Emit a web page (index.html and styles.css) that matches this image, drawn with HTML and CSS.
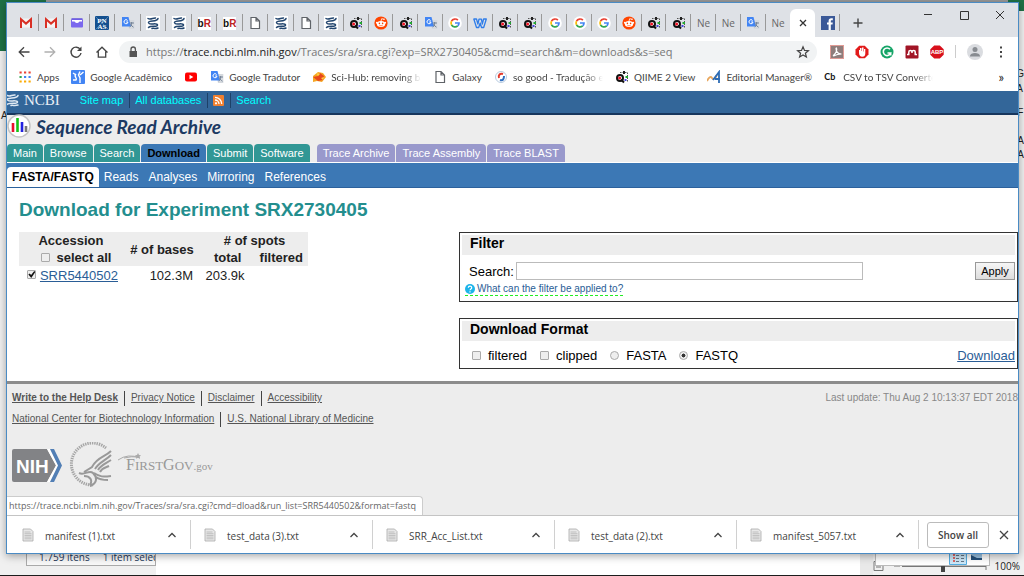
FILE: index.html
```html
<!DOCTYPE html>
<html lang="en">
<head>
<meta charset="utf-8">
<title>Download for Experiment SRX2730405</title>
<link rel="stylesheet" href="styles.css">
</head>
<body>
<svg class="defs" aria-hidden="true">
  <symbol id="gmail" viewBox="0 0 14 14"><path fill="#f4f4f4" d="M1 2.500h12v9H1z"/><path fill="none" stroke="#d93025" stroke-width="2" d="M2 12V3.300l5 4.300 5-4.300V12"/></symbol>
  <symbol id="mail" viewBox="0 0 14 14"><rect x="1" y="3" width="12" height="8.500" rx="1" fill="#7b68ee"/><path fill="#fff" d="M2 4h10v1.500H9.500q-2.500 3-5 0H2z"/><path d="M1.500 2.800h11" stroke="#5a48d8"/></symbol>
  <symbol id="gt" viewBox="0 0 14 14"><path fill="#d5d9de" d="M6 4h7.300v9H8z"/><path fill="#4285f4" d="M1 1h6.500l2.500 9.500H1z"/><path fill="none" stroke="#fff" d="M6.600 4.500A2 2 0 1 0 7 6H5.200"/><path fill="none" stroke="#6b7a90" stroke-width=".9" d="M8.500 7H13M10.700 6v1c0 2-1 3.500-2 4M9.500 8.200c.8 1.500 1.800 2.300 3 3"/></symbol>
  <symbol id="ncbi" viewBox="0 0 14 14"><rect width="14" height="14" fill="#fff"/><path fill="none" stroke="#23466f" stroke-width="1.500" stroke-linecap="round" d="M2 2.500c2.500 1.800 5-.8 7.500-.5M12 2.500C11 6.500 3 3.500 2.500 6.500M3 7.500c2 1.500 8-1 8.500 1.500C11.500 11.500 5 9 2.500 11.500M6 12.500c2-.5 4 .5 6-.5"/></symbol>
  <symbol id="doc" viewBox="0 0 14 14"><path fill="#fff" stroke="#5f6368" stroke-width="1.200" d="M3 1.500h5l3.500 3.500v7.500H3zM8 1.500V5h3.500"/></symbol>
  <symbol id="q" viewBox="0 0 14 14"><path fill="none" stroke="#555" stroke-dasharray="1.500 1" d="M5 2.500h7.500v9"/><circle cx="5" cy="8" r="3" fill="#fff" stroke="#111" stroke-width="2"/><path stroke="#111" stroke-width="2" d="M6 9.500l3 3"/><circle cx="4.600" cy="8" r="1.500" fill="#e12"/><path fill="#2a3" d="M10.500 6h2.500v2h-2.500z"/><path fill="#44d" d="M9.500 9h2v2h-2z"/><path fill="#222" d="M8 1h2v3H8z"/></symbol>
  <symbol id="reddit" viewBox="0 0 14 14"><circle cx="7" cy="7" r="6.600" fill="#ff4500"/><path fill="none" stroke="#fff" stroke-width=".8" d="M7 5l.7-2.300 2 .5"/><circle cx="2.900" cy="6.700" r="1" fill="#fff"/><circle cx="11.100" cy="6.700" r="1" fill="#fff"/><circle cx="10" cy="3.200" r=".8" fill="#fff"/><ellipse cx="7" cy="8" rx="4.200" ry="3" fill="#fff"/><circle cx="5.400" cy="7.400" r=".8" fill="#ff4500"/><circle cx="8.600" cy="7.400" r=".8" fill="#ff4500"/><path fill="none" stroke="#ff4500" stroke-width=".6" d="M5.300 9.300q1.700 1 3.400 0"/></symbol>
  <symbol id="g" viewBox="0 0 14 14"><circle cx="7" cy="7" r="6.800" fill="#fff"/><g fill="none" stroke-width="1.700"><path stroke="#ea4335" d="M3.500 5.200A4 4 0 0 1 9.900 4.200"/><path stroke="#fbbc05" d="M3.500 5.200a4 4 0 0 0 0 3.600"/><path stroke="#34a853" d="M3.500 8.800a4 4 0 0 0 6.200 1.100"/><path stroke="#4285f4" d="M9.700 9.900A4 4 0 0 0 11 7H7"/></g></symbol>
  <symbol id="w" viewBox="0 0 14 14"><path fill="none" stroke="#2f7de9" stroke-width="1.300" stroke-linejoin="round" d="M.8 3h2.700l1.400 5L6 3.200h2.400L9.300 8l1.300-5h2.700l-2.600 8.500H8.500L7.200 7l-1.500 4.500H3.500z"/></symbol>
  <symbol id="fb" viewBox="0 0 14 14"><rect width="14" height="14" fill="#3b5998"/><path fill="#fff" d="M7.600 14V8.500H6V6.500h1.600V5c0-1.900 1-2.800 2.700-2.800h1.500v2h-1c-.8 0-1 .3-1 1v1.300h2l-.3 2H9.800V14z"/></symbol>
  <symbol id="chev" viewBox="0 0 10 6"><path fill="none" stroke="#444" stroke-width="1.300" d="M1.500 5L5 1.500 8.500 5"/></symbol>
  <symbol id="file" viewBox="0 0 12 14"><path fill="#e8e8e8" stroke="#aaa" stroke-width=".8" d="M1 1h7.500L11 3.500V13H1z"/><path stroke="#b4b4b4" stroke-width=".8" d="M2.500 4h6M2.500 5.700h7M2.500 7.400h7M2.500 9.100h7M2.500 10.800h7"/></symbol>
</svg>

<div class="desktop">
  <div class="behind behind-green-left"></div>
  <div class="behind behind-green-right"></div>
  <div class="behind behind-sheet"></div>
  <div class="behind behind-letter">A</div>
  <div class="behind behind-cells"><span>G</span><span>A</span></div>
  <div class="behind behind-cells behind-cells-low"><span>F</span><span></span><span>A</span><span>A</span></div>
  <div class="behind behind-zoom">
    <svg viewBox="0 0 116 12"><path fill="none" stroke="#777" d="M1 1.500h9v9H1zM3 4h5M3 7h5M21 6h6M29 6.500h84M113 3v7"/><path fill="#444" d="M68 3h4v9h-4z"/></svg>
    <span>100%</span>
  </div>
  <div class="behind behind-explorer"><span>1.759 itens</span><span>1 item selecionado</span></div>
  <div class="behind behind-views">
    <svg viewBox="0 0 34 12"><path fill="#cde8f8" stroke="#56aee2" d="M.5.500h17v11H.5z"/><path stroke="#d66" stroke-width="2" stroke-dasharray="2 1" d="M5 1v9"/><path stroke="#678" d="M7 2.500h3M7 5.500h3M7 8.500h3M12 2.500h3M12 5.500h3M12 8.500h3"/><path fill="#9cc4e4" d="M22 1h11v6H22z"/><path fill="#25507a" d="M22 7V2l6 3h5v2z"/></svg>
  </div>

  <div class="window">
    <header class="strip">
      <div class="tabs">
        <div class="group group-a">
          <span class="tab"><svg><use href="#gmail"/></svg></span>
          <span class="tab"><svg><use href="#gmail"/></svg></span>
          <span class="tab"><svg><use href="#mail"/></svg></span>
          <span class="tab"><svg viewBox="0 0 14 14"><rect width="14" height="14" fill="#14508f"/><path stroke="#6f9dcb" stroke-width=".6" d="M0 0l14 14M14 0L0 14"/><text x="7" y="6.500" class="pnas-text">PN</text><text x="7" y="13" class="pnas-text">AS</text></svg></span>
          <span class="tab"><svg><use href="#gt"/></svg></span>
          <span class="tab"><svg><use href="#ncbi"/></svg></span>
          <span class="tab"><svg><use href="#ncbi"/></svg></span>
          <span class="tab"><b class="br">b<i>R</i></b></span>
          <span class="tab"><b class="br">b<i>R</i></b></span>
          <span class="tab"><svg><use href="#doc"/></svg></span>
          <span class="tab"><svg><use href="#ncbi"/></svg></span>
          <span class="tab"><svg><use href="#doc"/></svg></span>
        </div>
        <div class="group group-b">
          <span class="tab"><svg><use href="#ncbi"/></svg></span>
          <span class="tab"><svg><use href="#q"/></svg></span>
          <span class="tab"><svg><use href="#reddit"/></svg></span>
          <span class="tab"><svg><use href="#q"/></svg></span>
          <span class="tab"><svg><use href="#gt"/></svg></span>
          <span class="tab"><svg><use href="#g"/></svg></span>
          <span class="tab"><svg><use href="#w"/></svg></span>
          <span class="tab"><svg><use href="#q"/></svg></span>
          <span class="tab"><svg><use href="#q"/></svg></span>
          <span class="tab"><svg><use href="#g"/></svg></span>
          <span class="tab"><svg><use href="#g"/></svg></span>
          <span class="tab"><svg><use href="#g"/></svg></span>
          <span class="tab"><svg><use href="#reddit"/></svg></span>
          <span class="tab"><svg><use href="#q"/></svg></span>
          <span class="tab"><svg><use href="#q"/></svg></span>
          <span class="tab">Ne</span>
          <span class="tab">Ne</span>
          <span class="tab"><svg><use href="#gt"/></svg></span>
          <span class="tab bare">Ne</span>
          <span class="tab active"><button aria-label="Close tab"><svg viewBox="0 0 14 14"><path stroke="#333" stroke-width="1.300" d="M4 4l6 6M10 4l-6 6"/></svg></button></span>
          <span class="tab"><svg><use href="#fb"/></svg></span>
        </div>
        <button class="new-tab" aria-label="New tab"><svg viewBox="0 0 14 14"><path stroke="#444" stroke-width="1.400" d="M7 2.500v9M2.500 7h9"/></svg></button>
      </div>
      <div class="controls">
        <button aria-label="Minimize"><svg viewBox="0 0 14 14"><path stroke="#333" d="M3 6.500h8"/></svg></button>
        <button aria-label="Maximize"><svg viewBox="0 0 14 14"><path fill="none" stroke="#333" d="M3.500 3.500h8v8h-8z"/></svg></button>
        <button aria-label="Close"><svg viewBox="0 0 14 14"><path stroke="#333" d="M3 3l8 8M11 3l-8 8"/></svg></button>
      </div>
    </header>

    <div class="toolbar">
      <div class="nav">
        <button aria-label="Back"><svg viewBox="0 0 14 14"><path fill="none" stroke="#444" stroke-width="1.300" d="M12.500 7H2.500M7 2.200L2.200 7 7 11.800"/></svg></button>
        <button aria-label="Forward"><svg viewBox="0 0 14 14"><path fill="none" stroke="#b0b0b0" stroke-width="1.300" d="M1.500 7h10M7 2.200L11.800 7 7 11.800"/></svg></button>
        <button aria-label="Reload"><svg viewBox="0 0 14 14"><path fill="none" stroke="#444" stroke-width="1.400" d="M11.300 4.500A5 5 0 1 0 12 8"/><path fill="#444" d="M12.500 1.500v4.500H8z"/></svg></button>
        <button aria-label="Home"><svg viewBox="0 0 14 14"><path fill="none" stroke="#444" stroke-width="1.300" d="M1.500 7.500L7 2.200l5.500 5.300M3.300 6.500v5.700h7.400V6.500"/></svg></button>
      </div>
      <div class="address">
        <svg viewBox="0 0 14 14"><path fill="#555" d="M3.500 6h7.500v6H3.500z"/><path fill="none" stroke="#555" stroke-width="1.300" d="M5 6V4.200a2.200 2.200 0 0 1 4.400 0V6"/></svg>
        <span class="url">https://<em>trace.ncbi.nlm.nih.gov</em>/Traces/sra/sra.cgi?exp=SRX2730405&amp;cmd=search&amp;m=downloads&amp;s=seq</span>
        <button aria-label="Bookmark this page"><svg viewBox="0 0 14 14"><path fill="none" stroke="#444" stroke-width="1.200" d="M7 1.800l1.500 3.600 3.900.3-3 2.500 1 3.800L7 10l-3.400 2 1-3.800-3-2.500 3.900-.3z"/></svg></button>
      </div>
      <div class="extensions">
        <svg viewBox="0 0 14 14"><rect x=".5" y=".5" width="13" height="13" fill="#8f7d7b" stroke="#e09a94"/><path fill="none" stroke="#fff" stroke-width="1.200" d="M6 2.500c2 2 0 6-3 8.500M6 3c0 4 2 6 5.500 6-3 0-5 .5-8 2"/></svg>
        <svg viewBox="0 0 14 14"><path fill="#e21b1b" d="M4.200.7h5.600l3.700 3.700v5.200l-3.700 3.700H4.200L.5 9.600V4.400z"/><path fill="#fff" d="M4 5h1V3h1.500v3h.5V2.500h1.500v4H9V4h1.300v4.500c0 2-1 3.300-3 3.300S4 10 4 8z"/></svg>
        <svg viewBox="0 0 14 14"><circle cx="7" cy="7" r="6.500" fill="#15a467"/><path fill="none" stroke="#fff" stroke-width="1.600" d="M10 4.300A3.800 3.800 0 1 0 10.700 8H7.500M10.700 8v2.500"/></svg>
        <svg viewBox="0 0 14 14"><rect x=".5" y=".5" width="13" height="13" rx="1" fill="#a11526"/><path fill="none" stroke="#fff" stroke-width="1.500" d="M3.800 9.500V7q0-1.500 1.600-1.500T7 7v1-1q0-1.500 1.600-1.500T10.200 7v2.500M2 9.500h2.500M9.500 9.500H12"/></svg>
        <svg viewBox="0 0 14 14"><path fill="#d8101c" d="M4.200.5h5.600l3.900 3.700v5.600l-3.900 3.700H4.200L.3 9.800V4.200z"/><text x="7" y="9.200" class="abp-text">ABP</text></svg>
        <i class="rule"></i>
        <svg class="avatar" viewBox="0 0 16 16"><circle cx="8" cy="8" r="8" fill="#dadce0"/><circle cx="8" cy="5.500" r="2.500" fill="#888c91"/><path fill="#888c91" d="M3 12c0-4 10-4 10 0v.5H3z"/></svg>
        <button aria-label="Menu"><svg viewBox="0 0 14 14"><path fill="#444" d="M6 1.500h2v2H6zM6 6h2v2H6zM6 10.500h2v2H6z"/></svg></button>
      </div>
    </div>

    <nav class="bookmarks">
      <a href="#"><svg viewBox="0 0 14 14"><path stroke="#ea4335" stroke-width="2.200" stroke-dasharray="2.200 2.300" d="M1.500 2.500h12"/><path stroke="#34a853" stroke-width="2.200" stroke-dasharray="2.200 2.300" d="M1.500 7h6"/><path stroke="#4285f4" stroke-width="2.200" stroke-dasharray="2.200 2.300" d="M6 7h8"/><path stroke="#fbab05" stroke-width="2.200" stroke-dasharray="2.200 2.300" d="M1.500 11.500h12"/></svg>Apps</a>
      <a href="#"><svg viewBox="0 0 14 14"><rect width="14" height="14" rx="1" fill="#4285f4"/><path fill="none" stroke="#fff" stroke-width="1.400" d="M2 3l3 2M9 1.500L7.500 5 9 8v5M5 4c-3 3 2 4 0 6H2M12.500 2L9 5"/></svg>Google Acadêmico</a>
      <a href="#" aria-label="YouTube"><svg viewBox="0 0 14 14"><rect x="1" y="2.500" width="12" height="9" rx="2" fill="#f00"/><path fill="#fff" d="M5.500 4.800v4.400L9.300 7z"/></svg></a>
      <a href="#"><svg><use href="#gt"/></svg>Google Tradutor</a>
      <a href="#" class="fade"><svg viewBox="0 0 14 14"><path fill="#f5a623" d="M1 6l5-4 5 1 3 4-4 5-5-1-4 1z"/><path fill="#e8481c" d="M1 7l5-1 2-3 4 3-1 4-5 1z"/><path fill="#ffd044" d="M4 3l4 1-2 2zM9 8l3-1-1 3z"/></svg><span>Sci-Hub: removing ba</span></a>
      <a href="#"><svg><use href="#doc"/></svg>Galaxy</a>
      <a href="#" class="fade"><svg viewBox="0 0 14 14"><circle cx="7" cy="7" r="5.500" fill="#fff" stroke="#b8cbe0"/><path fill="none" stroke="#e33b2e" stroke-width="2" d="M9 4C6 3 4 5 5 8"/><path fill="none" stroke="#2f6fc0" stroke-width="2" d="M6 10c3 1 4-1 4-4"/></svg><span>so good - Tradução e</span></a>
      <a href="#"><svg><use href="#q"/></svg>QIIME 2 View</a>
      <a href="#"><svg viewBox="0 0 14 14"><path fill="none" stroke="#e8a860" stroke-width="1.800" d="M0 11q3-6 5-3t5-3"/><path fill="none" stroke="#2d6cb5" stroke-width="1.800" d="M6 10l6-8v11M8 9h5"/></svg>Editorial Manager®</a>
      <a href="#" class="fade"><b>Cb</b><span>CSV to TSV Converter</span></a>
      <button class="more" aria-label="More bookmarks">»</button>
    </nav>

    <div class="page">
      <div class="ncbi-bar">
        <svg class="ncbi-mark" viewBox="0 0 12 14"><path fill="none" stroke="#dfe9f3" stroke-width="1.500" stroke-linecap="round" d="M0 2.500c3 1.800 5-1 8-.5M11 2.500C10 6.500 1 3.500 0 6.500M1 7.500c2 1.500 9-1 9.500 1.500C10.500 11.500 3 9 0 11.500M4 12.500c2-.5 4 .5 7-.5"/></svg>
        <span class="ncbi-name">NCBI</span>
        <a href="#">Site map</a><a href="#">All databases</a>
        <a href="#" aria-label="RSS"><svg class="rss" viewBox="0 0 11 11"><rect width="11" height="11" rx="1" fill="#f08030"/><circle cx="3" cy="8.300" r="1.100" fill="#fff"/><path fill="none" stroke="#fff" stroke-width="1.300" d="M2 5a4 4 0 0 1 4 4M2 2.300A6.700 6.700 0 0 1 8.700 9"/></svg></a>
        <a href="#">Search</a>
      </div>
      <div class="brand">
        <svg viewBox="0 0 24 24"><circle cx="12" cy="12" r="11" fill="#fff" stroke="#c4c4c4" stroke-width="1.500"/><path stroke="#e8112d" stroke-width="2.600" d="M6 9v9"/><path stroke="#16c416" stroke-width="2.600" d="M10.500 4v14"/><path stroke="#2222e0" stroke-width="2.600" d="M15 8v10"/><path stroke="#777" stroke-width="2.600" d="M19 12v6"/></svg>
        <span>Sequence Read Archive</span>
      </div>
      <nav class="main-tabs">
        <a href="#">Main</a><a href="#">Browse</a><a href="#">Search</a><a href="#" class="current">Download</a><a href="#">Submit</a><a href="#">Software</a>
        <a href="#" class="trace first">Trace Archive</a><a href="#" class="trace">Trace Assembly</a><a href="#" class="trace">Trace BLAST</a>
      </nav>
      <nav class="sub-tabs"><a href="#" class="current">FASTA/FASTQ</a><a href="#">Reads</a><a href="#">Analyses</a><a href="#">Mirroring</a><a href="#">References</a></nav>

      <h1>Download for Experiment SRX2730405</h1>
      <div class="content">
        <table>
          <thead>
            <tr><th class="acc">Accession</th><th rowspan="2" class="bases"># of bases</th><th colspan="2"># of spots</th></tr>
            <tr><th><label class="all"><input type="checkbox">select all</label></th><th class="total">total</th><th>filtered</th></tr>
          </thead>
          <tbody>
            <tr><td><input type="checkbox" checked aria-label="Select SRR5440502"> <a href="#">SRR5440502</a></td><td>102.3M</td><td>203.9k</td><td></td></tr>
          </tbody>
        </table>
        <div class="panels">
          <section class="panel">
            <h2>Filter</h2>
            <div class="search-row">
              <label for="search">Search:</label>
              <input id="search" type="text">
              <button>Apply</button>
            </div>
            <a href="#" class="help"><svg viewBox="0 0 10 10"><circle cx="5" cy="5" r="5" fill="#1db4ea"/><path fill="none" stroke="#fff" stroke-width="1.200" d="M3.300 3.800C3.300 1.700 6.700 1.700 6.700 3.700 6.700 5 5 4.800 5 6.300M5 7.200v1.200"/></svg>What can the filter be applied to?</a>
          </section>
          <section class="panel">
            <h2>Download Format</h2>
            <div class="format-row">
              <label><input type="checkbox">filtered</label>
              <label><input type="checkbox">clipped</label>
              <label><input type="radio" name="fmt">FASTA</label>
              <label><input type="radio" name="fmt" checked>FASTQ</label>
              <a href="#">Download</a>
            </div>
          </section>
        </div>
      </div>

      <footer>
        <span class="updated">Last update: Thu Aug 2 10:13:37 EDT 2018</span>
        <div class="links"><a href="#"><b>Write to the Help Desk</b></a><a href="#">Privacy Notice</a><a href="#">Disclaimer</a><a href="#">Accessibility</a></div>
        <div class="links"><a href="#">National Center for Biotechnology Information</a><a href="#">U.S. National Library of Medicine</a></div>
        <div class="logos">
          <svg class="nih" viewBox="0 0 50 33"><path fill="#828386" d="M2 0h33l9 16.500L35 33H2a2 2 0 0 1-2-2V2a2 2 0 0 1 2-2z"/><path fill="#fff" d="M35 0h3l9 16.500L38 33h-3l9-16.500z"/><path fill="#527fb5" d="M38 0h4l8 16.500L42 33h-4l8-16.500z"/><text x="4" y="24" class="nih-text">NIH</text></svg>
          <svg class="hhs" viewBox="0 0 46 46"><path fill="none" stroke="#a5a5a5" stroke-width="3" stroke-dasharray="1.400 .9" d="M39 6A21 21 0 1 0 26 43"/><g fill="none" stroke="#999" stroke-width="2"><path d="M44 9c-6 6-14 6-19 16l-8 5M44 13c-6 6-12 7-16 14M44 18c-6 4-10 5-13 10M42 24c-4 2-7 2-9 6M12 31c6 3 10-4 14 0s5 10-3 13M17 34c6 0 9 4 6 9M27 31c6 4 9 4 17 3M29 35c4 3 8 3 12 3"/></g></svg>
          <span class="firstgov"><svg viewBox="0 0 26 14"><path fill="none" stroke="#aaa" d="M0 7Q10 0 22 5M6 5q8-2 14-1"/><path fill="#aaa" d="M20 0l1 2 2 .3-1.500 1.500.5 2-2-1-2 1 .4-2L17 2.300l2-.3z"/></svg>F<small>IRST</small>G<small>OV</small><i>.gov</i></span>
        </div>
        <div class="status">https://trace.ncbi.nlm.nih.gov/Traces/sra/sra.cgi?cmd=dload&amp;run_list=SRR5440502&amp;format=fastq</div>
      </footer>
    </div>

    <div class="downloads">
      <div class="item"><svg class="file"><use href="#file"/></svg><span>manifest (1).txt</span><button aria-label="Options"><svg><use href="#chev"/></svg></button></div>
      <div class="item"><svg class="file"><use href="#file"/></svg><span>test_data (3).txt</span><button aria-label="Options"><svg><use href="#chev"/></svg></button></div>
      <div class="item"><svg class="file"><use href="#file"/></svg><span>SRR_Acc_List.txt</span><button aria-label="Options"><svg><use href="#chev"/></svg></button></div>
      <div class="item"><svg class="file"><use href="#file"/></svg><span>test_data (2).txt</span><button aria-label="Options"><svg><use href="#chev"/></svg></button></div>
      <div class="item"><svg class="file"><use href="#file"/></svg><span>manifest_5057.txt</span><button aria-label="Options"><svg><use href="#chev"/></svg></button></div>
      <button class="show-all">Show all</button>
      <button class="close-bar" aria-label="Close downloads"><svg viewBox="0 0 14 14"><path stroke="#444" stroke-width="1.300" d="M3 3l8 8M11 3l-8 8"/></svg></button>
    </div>
  </div>
</div>
</body>
</html>
```
FILE: styles.css
```css
* { box-sizing: border-box; }
body { margin: 0; font-family: "Liberation Sans", Arial, sans-serif; font-size: 13px; color: #222; }
button { border: 0; padding: 0; background: none; font: inherit; color: inherit; display: flex; align-items: center; justify-content: center; }
svg { display: block; flex: none; width: 14px; height: 14px; }
.defs { position: absolute; width: 0; height: 0; }
.pnas-text { font: bold 7px "Liberation Serif", serif; fill: #fff; text-anchor: middle; }
.abp-text { font: bold 6px "Liberation Sans", sans-serif; fill: #fff; text-anchor: middle; }
.nih-text { font: bold 19px "Liberation Sans", sans-serif; fill: #fff; }

/* desktop */
.desktop { position: relative; display: flex; min-height: 100vh; padding: 2px 5px 21px 6px; overflow: hidden; background: #f0f0f0; border-bottom: 1px solid #1c1c1c; }
.behind { position: absolute; font-size: 10px; color: #222; }
.behind-green-left { left: 0; top: 0; width: 46px; height: 51px; background: #1e7145; }
.behind-green-right { right: 0; top: 0; left: 46px; height: 11px; background: linear-gradient(90deg, #9a9a9a calc(100% - 16px), #1e7145 0); }
.behind-sheet { left: 156px; right: 151px; bottom: 0; height: 24px; background: #fff; border-right: 13px solid #e9e9e9; }
.behind-letter { left: 1px; top: 110px; }
.behind-cells { right: 0; top: 66px; display: flex; flex-direction: column; line-height: 15px; }
.behind-cells-low { top: 106px; line-height: 14px; }
.behind-cells span { min-height: 14px; }
.behind-zoom { right: 4px; bottom: 2px; display: flex; align-items: center; gap: 6px; font: 10px "Open Sans", sans-serif; }
.behind-zoom svg { width: 116px; height: 12px; }
.behind-explorer { left: 26px; bottom: 9px; width: 130px; height: 18px; padding-left: 12px; display: flex; gap: 13px; align-items: center; overflow: hidden; white-space: nowrap; background: #f8f8f8; border: 1px solid #aaa; font: 10px "Open Sans", sans-serif; color: #1e395b; }
.behind-views { right: 34px; bottom: 9px; width: 115px; height: 16px; padding: 2px 0 0 73px; background: #fff; border: 1px solid #bbb; }
.behind-views svg { width: 34px; height: 12px; }

/* browser window */
.window { position: relative; flex: 1; min-width: 0; display: flex; flex-direction: column; background: #fff; border: 1px solid #4a8bc4; box-shadow: 0 2px 8px rgba(0,0,0,.35); font-family: "Open Sans", "Noto Sans", sans-serif; overflow: hidden; }
.strip { display: flex; justify-content: space-between; height: 34px; background: #dee1e6; }
.tabs { flex: 1; display: flex; align-items: flex-end; padding-left: 6px; min-width: 0; }
.group { display: flex; min-width: 0; }
.group-a { flex: 0 1 306px; }
.group-b { flex: 0 1 521px; }
.tab { position: relative; flex: 1 1 0; min-width: 0; height: 28px; display: flex; align-items: center; justify-content: center; font-size: 10px; color: #666; }
.tab::after { content: ""; position: absolute; right: 0; top: 5px; width: 1px; height: 17px; background: #999; }
.tab.active::after, .tab.bare::after { display: none; }
.tab.active { background: #fff; border-radius: 6px 6px 0 0; }
.br { font: bold 10px "Liberation Sans", sans-serif; color: #111; background: #fff; padding: 1px 0; }
.br i { font-style: normal; color: #b22; }
.new-tab { width: 36px; height: 28px; }
.controls { display: flex; padding-top: 2px; gap: 22px; padding-right: 11px; }
.controls button { height: 20px; }
.toolbar { display: flex; align-items: center; height: 29px; padding: 0 10px; }
.nav { display: flex; gap: 12px; width: 102px; }
.address { flex: 1; min-width: 0; display: flex; align-items: center; gap: 6px; height: 22px; padding: 0 7px; border-radius: 11px; background: #f1f3f4; font-size: 11px; color: #777; }
.url { flex: 1; min-width: 0; overflow: hidden; white-space: nowrap; }
.url em { font-style: normal; color: #222; }
.extensions { display: flex; align-items: center; gap: 11px; padding-left: 13px; }
.rule { width: 1px; height: 13px; background: #ccc; }
.extensions .avatar { width: 16px; height: 16px; }
.bookmarks { display: flex; align-items: center; height: 25px; padding: 0 14px 4px 11px; font-family: Lato, "Open Sans", sans-serif; font-size: 10px; white-space: nowrap; }
.bookmarks a { display: flex; align-items: center; gap: 5px; margin-right: 12px; color: #444; text-decoration: none; }
.bookmarks .fade span { width: 90px; overflow: hidden; -webkit-mask-image: linear-gradient(90deg, #000 80%, transparent); mask-image: linear-gradient(90deg, #000 80%, transparent); }
.bookmarks b { width: 14px; color: #111; font-size: 9px; }
.more { margin-left: auto; font-size: 13px; }

/* web page */
.page { flex: 1; display: flex; flex-direction: column; font-family: "Liberation Sans", Arial, sans-serif; }
.ncbi-bar { display: flex; align-items: center; height: 24px; padding-bottom: 4px; background: #336699; border-bottom: 2px solid #17365d; font-size: 11px; }
.ncbi-mark { width: 12px; height: 14px; }
.ncbi-name { font: 15px "Liberation Serif", serif; color: #e8eef5; margin: 0 15px 0 5px; }
.ncbi-bar a { color: #0ff; text-decoration: none; padding: 0 6px 0 5px; line-height: 15px; border-right: 1px solid #1d4168; }
.ncbi-bar a:last-child { border: 0; }
.rss { width: 11px; height: 15px; }
.brand { display: flex; align-items: center; gap: 5px; height: 29px; padding-bottom: 7px; background: #ededed; font: italic bold 19px Lato, sans-serif; color: #1c3a63; }
.brand svg { width: 24px; height: 24px; }
.main-tabs { display: flex; align-items: flex-end; gap: 1px; height: 19px; background: #ededed; border-bottom: 1px solid #fff; font-size: 11px; }
.main-tabs a { height: 18px; padding: 0 6px; line-height: 18px; border-radius: 4px 4px 0 0; background: #319795; color: #fff; text-decoration: none; }
.main-tabs .current { color: #000; background: #3c78b5; font-weight: bold; }
.main-tabs .trace { background: #9999cc; }
.main-tabs .first { margin-left: 6px; }
.sub-tabs { display: flex; align-items: flex-end; height: 25px; background: #3c78b5; border-bottom: 1px solid #2c619c; font-size: 12px; }
.sub-tabs a { padding: 0 5px; line-height: 20px; color: #fff; text-decoration: none; }
.sub-tabs .current { color: #000; background: #fff; font-weight: bold; border-radius: 4px 4px 0 0; }
h1 { margin: 10px 0 10px 12px; font-size: 19px; line-height: 24px; color: #238e8e; }
.content { display: flex; align-items: flex-start; justify-content: space-between; padding-left: 12px; }
table { border-collapse: collapse; width: 289px; table-layout: fixed; line-height: 17px; }
th, td { padding: 0; text-align: center; }
thead { background: #ededed; }
.acc { width: 104px; }
.bases { width: 78px; }
.total { width: 49px; }
td { white-space: nowrap; text-align: right; line-height: 19px; }
td:first-child { padding-right: 5px; }
td:nth-child(2) { padding-right: 8px; }
td:nth-child(3) { padding-right: 10px; }
.content a { color: #2a5d96; }
input[type=checkbox], input[type=radio] { appearance: none; width: 9px; height: 9px; margin: 0; border: 1px solid #aaa; border-radius: 1px; background: #eee; vertical-align: 1px; }
input[type=radio] { border-radius: 50%; }
input[type=radio]:checked { background: radial-gradient(#333 35%, #eee 45%); }
input[type=checkbox]:checked::before { content: ""; display: block; width: 7px; height: 7px; background: #111; clip-path: polygon(0 50%, 20% 35%, 40% 58%, 85% 0, 100% 15%, 42% 100%); }
.all { display: flex; align-items: center; justify-content: center; gap: 7px; padding-left: 10px; }
.panels { flex: 0 1 559px; display: flex; flex-direction: column; gap: 16px; }
.panel { border: 1px solid #333; padding: 2px; color: #000; }
h2 { margin: 0; padding: 0 8px 3px; font-size: 14px; line-height: 17px; background: #ededed; }
.search-row { display: flex; align-items: center; margin-top: 7px; padding-left: 7px; }
.search-row input { flex: 0 1 347px; height: 18px; margin-left: 2px; border: 1px solid #bbb; }
.search-row button { width: 40px; height: 18px; margin-left: auto; border: 1px solid #999; background: linear-gradient(#f6f6f6, #ddd); font-size: 11px; }
.help { display: flex; width: fit-content; align-items: center; gap: 2px; margin: 3px 0 3px 3px; font-size: 10px; line-height: 12px; text-decoration: none; border-bottom: 1px dashed #2e2; }
.help svg { width: 10px; height: 10px; }
.format-row { display: flex; align-items: center; gap: 13px; margin-top: 4px; padding-left: 10px; line-height: 21px; }
.format-row label { display: flex; align-items: center; gap: 7px; }
.format-row a { margin-left: auto; }
footer { position: relative; flex: 1; margin-top: 12px; padding: 7px 5px 0; background: #ededed; border-top: 3px solid #8c8c8c; font-size: 10px; color: #888; }
.updated { float: right; margin-right: -5px; line-height: 14px; }
.links { display: flex; height: 21px; line-height: 14px; }
.links a { color: #555; }
.links a + a { border-left: 1px solid #444; margin-left: 6px; padding-left: 6px; height: 15px; }
.logos { display: flex; align-items: center; gap: 5px; margin-top: 9px; }
.logos .nih { width: 50px; height: 33px; }
.logos .hhs { width: 46px; height: 46px; }
.firstgov { position: relative; padding-left: 8px; font: 16px "Liberation Serif", serif; color: #999; }
.firstgov svg { position: absolute; left: 0; top: -3px; width: 26px; height: 14px; }
.firstgov small { font-size: 13px; }
.firstgov i { font-size: 11px; font-style: normal; }
.status { position: absolute; left: 0; bottom: 0; height: 19px; padding: 0 6px 0 2px; line-height: 18px; background: #fff; border: 1px solid #ccc; border-width: 1px 1px 0 0; border-radius: 0 4px 0 0; font-family: "Open Sans", sans-serif; font-size: 9px; color: #666; white-space: nowrap; }

/* downloads bar */
.downloads { display: flex; align-items: center; height: 38px; padding: 0 7px 0 2px; border-top: 1px solid #c4c4c4; font-size: 10px; color: #444; }
.item { flex: 0 1 182px; min-width: 0; height: 29px; display: flex; align-items: center; border-right: 1px solid #d0d0d0; padding: 0 13px 0 13px; }
.item span { flex: 1; margin-left: 11px; padding-top: 3px; white-space: nowrap; }
.item .file { width: 12px; height: 14px; }
.item button svg { width: 10px; height: 6px; }
.show-all { margin-left: auto; width: 62px; height: 26px; border: 1px solid #bbb; border-radius: 3px; font-weight: 600; }
.close-bar { margin-left: 8px; }
```
